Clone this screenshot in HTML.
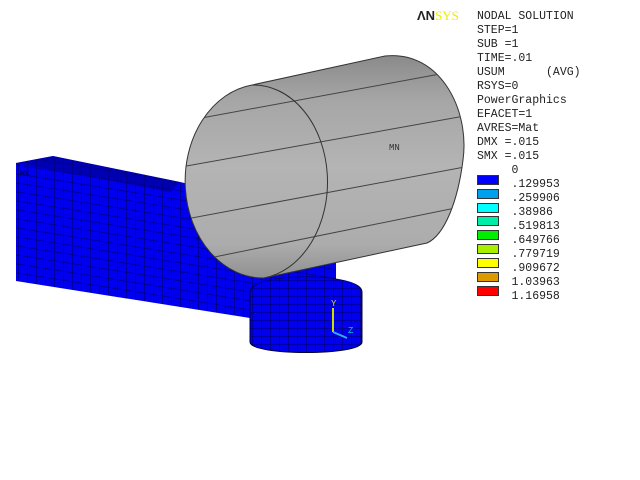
<!DOCTYPE html>
<html><head><style>
body{margin:0;background:#fff;width:640px;height:480px;overflow:hidden;position:relative}
.t{position:absolute;font-family:"Liberation Mono",monospace;font-size:11.5px;color:#222;line-height:14px;white-space:pre}
.sw{position:absolute;left:477px;width:22px;height:10px;border:1px solid #333;box-sizing:border-box}
</style></head><body>
<svg width="640" height="480" style="position:absolute;left:0;top:0">
<defs>
<pattern id="m" width="9" height="9" patternUnits="userSpaceOnUse" patternTransform="skewY(9)">
<rect width="9" height="9" fill="#0000ee"/><path d="M0 0H9M0 0V9" stroke="#000033" stroke-width="0.8"/></pattern>
<pattern id="m2" width="9" height="8" patternUnits="userSpaceOnUse">
<rect width="9" height="8" fill="#0000ee"/><path d="M0 0H9M0 0V8" stroke="#000033" stroke-width="0.8"/></pattern>
<linearGradient id="g" x1="0" y1="0" x2="0" y2="1"><stop offset="0" stop-color="#8a8a8a"/><stop offset=".2" stop-color="#a6a6a6"/><stop offset=".5" stop-color="#b4b4b4"/><stop offset=".85" stop-color="#acacac"/><stop offset="1" stop-color="#909090"/></linearGradient>
<clipPath id="c"><path d="M252,85 L385,56 C440,50 470,110 463,160 C458,200 445,235 427,243 L264,278 A78,97 0 0 1 252,85Z"/></clipPath>
</defs>
<polygon points="16,163 53,156 180,182 336,218 336,280 250,318 16,281" fill="url(#m)"/>
<polygon points="16,163 53,156 180,182 170,192" fill="#000088" opacity=".6"/>
<path d="M252,85 L385,56 C440,50 470,110 463,160 C458,200 445,235 427,243 L264,278 A78,97 0 0 1 252,85Z" fill="url(#g)" stroke="#333" stroke-width="1"/>
<g stroke="#444" stroke-width="1" fill="none" clip-path="url(#c)">
<path d="M180,122 L440,74"/><path d="M170,169 L470,115"/><path d="M170,222 L470,166"/><path d="M180,264 L470,205"/>
</g>
<path d="M252,85 A74,97 0 0 1 264,278" fill="none" stroke="#333" stroke-width="1"/>
<path d="M250,292 C250,272 362,272 362,292 L362,342 C362,356 250,356 250,342Z" fill="url(#m2)" stroke="#000033"/>
<ellipse cx="306" cy="288" rx="52" ry="11" fill="url(#m2)" opacity=".9"/>
<path d="M333,332 L333,308" stroke="#ccdd00" stroke-width="2"/><path d="M333,332 L347,338" stroke="#33aaff" stroke-width="2"/>
<text x="331" y="306" font-family="Liberation Mono" font-size="9" fill="#dd0">Y</text>
<text x="348" y="333" font-family="Liberation Mono" font-size="9" fill="#0cc">Z</text>
<text x="389" y="150" font-family="Liberation Mono" font-size="9" fill="#333">MN</text>
<text x="20" y="176" font-family="Liberation Mono" font-size="8" fill="#003">MX</text>
</svg>
<div class="t" style="left:417px;top:9px;font-family:'Liberation Sans',sans-serif;font-weight:bold;font-size:13px">ΛN<span style="color:#ee0;font-weight:normal;font-family:'Liberation Serif',serif">SYS</span></div>
<div class="t" style="left:477px;top:10px">NODAL SOLUTION
STEP=1
SUB =1
TIME=.01
USUM      (AVG)
RSYS=0
PowerGraphics
EFACET=1
AVRES=Mat
DMX =.015
SMX =.015
     0
     .129953
     .259906
     .38986
     .519813
     .649766
     .779719
     .909672
     1.03963
     1.16958</div>
<div class="sw" style="top:175px;background:#0000ff"></div>
<div class="sw" style="top:189px;background:#00a0ee"></div>
<div class="sw" style="top:203px;background:#00ffff"></div>
<div class="sw" style="top:216px;background:#00eeaa"></div>
<div class="sw" style="top:230px;background:#00ee00"></div>
<div class="sw" style="top:244px;background:#aaee00"></div>
<div class="sw" style="top:258px;background:#ffff00"></div>
<div class="sw" style="top:272px;background:#dd9900"></div>
<div class="sw" style="top:286px;background:#ff0000"></div>
</body></html>
